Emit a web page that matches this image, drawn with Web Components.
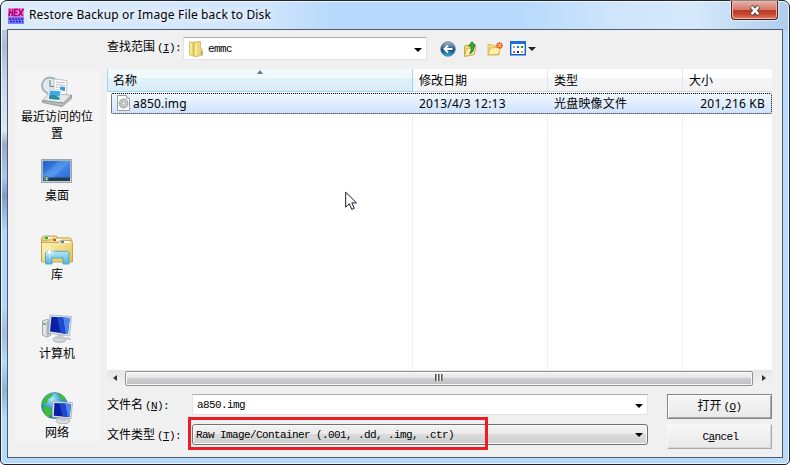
<!DOCTYPE html>
<html lang="zh-CN">
<head>
<meta charset="utf-8">
<title>Restore Backup or Image File back to Disk</title>
<style>
  html, body { margin: 0; height: 100%; overflow: hidden; background: #fff; }
  body {
    --ui: "Noto Sans", "Noto Sans CJK SC", sans-serif;
    --fixed: "Liberation Mono", "Noto Sans CJK SC", monospace;
    font: 12px/16px var(--ui);
    color: #000;
  }
</style>
</head>
<body>
<win-dialog></win-dialog>

<script>
class WinDialog extends HTMLElement {
  constructor() {
    super();
    this.attachShadow({mode: 'open'}).innerHTML = `
    <style>
      * { box-sizing: border-box; }
      :host {
        display: flex;
        flex-direction: column;
        box-sizing: border-box;
        position: relative;
        width: 790px;
        height: 465px;
        padding: 0 6px 6px;
        border: 1px solid #20242c;
        border-radius: 7px 7px 5px 5px;
        box-shadow: inset 0 0 0 1px #eef6ff;
        background:
          linear-gradient(90deg, #dcebfb 0, #cfe5fc 34%, #b7dafc 42% 66%, #cfe5fc 78%, #d6e9fc 88%, #aecdec) top / 100% 29px no-repeat,
          linear-gradient(#d3e5f8 0, #a9bdd6 10%, #c3d9f1 18%, #dbe9f8 28%, #96abc8 31%, #a7c8ee 38%, #7f9dc8 42%, #b4d7fb 50%, #b4d7fb 66%, #a0bfd8 72%, #b5dafe 78%, #8fb3d4 84%, #b5dafe 90%) left / 8px 100% no-repeat,
          #b7dafc;
      }
      header { display: flex; height: 28px; flex: none; }
      header svg { margin: 7px 0 0 1px; flex: none; }
      h1 {
        flex: 1;
        margin: 5px 0 0 5px;
        font: 12px/18px var(--ui);
        letter-spacing: .15px;
        white-space: nowrap;
        text-shadow: 0 0 7px #fff, 0 0 10px #fff;
      }
      .close {
        display: flex;
        align-items: center;
        justify-content: center;
        width: 47px;
        height: 19px;
        margin-right: 5px;
        border: 1px solid #4d1d24;
        border-top: 0;
        border-radius: 0 0 4px 4px;
        box-shadow: inset 0 0 0 1px #f0b5a9, 0 0 1px 1px #ffffff80;
        background: linear-gradient(#eab1a6, #d4796c 48%, #b93924 50%, #c84a30 75%, #df8164);
      }
      .close svg { margin: 0; }
      main {
        flex: 1;
        display: flex;
        flex-direction: column;
        border: 1px solid #4d5c6b;
        background: #f0f0f0;
        padding: 7px 10px 0 7px;
      }
      .look { display: flex; height: 23px; padding-left: 92px; align-items: center; }
      .look combo-box { width: 244px; height: 23px; }
      .look field-label { width: 76px; margin-top: -1px; }
      tool-strip { margin-left: 13px; }
      .body { display: flex; gap: 7px; margin-top: 9px; }
      places-bar { width: 85px; height: 374px; }
      .right { width: 665px; }
      .form { display: flex; justify-content: space-between; margin-top: 8px; }
      .fields { width: 541px; }
      .row { display: flex; align-items: flex-start; height: 30px; }
      .row field-label { width: 85px; margin-top: 4px; }
      .row combo-box { flex: 1; height: 21px; }
      .buttons { display: flex; flex-direction: column; gap: 5px; width: 105px; }
      .mark {
        position: absolute;
        left: 187px;
        top: 416px;
        width: 300px;
        height: 33px;
        border: 3px solid #ed1c24;
      }
      .pointer { position: absolute; left: 344px; top: 190px; }
    </style>
    <header>
      <svg width="16" height="16" viewBox="0 0 16 16">
        <path fill="#ee7fd0" d="M0 0h16v9H0z"/>
        <path fill="none" stroke="#a5007d" stroke-width="1.5" d="M2 1 1 8M5 1 4 8M1.500 4.500h3M10 1.500H7L6 7.500h3.500M6.500 4.500h3M11 1l3.500 7M15.500 1l-5 7"/>
        <path fill="#7d7cff" d="M0 9h16v7H0z"/>
        <path fill="none" stroke="#2b1fb8" stroke-width="1.300" stroke-dasharray="2 1" d="M1 11h14M2 13.500h13"/>
      </svg>
      <h1>Restore Backup or Image File back to Disk</h1>
      <div class="close">
        <svg width="12" height="11" viewBox="0 0 12 11">
          <path fill="none" stroke="#53434a" stroke-width="4.600" d="m2.300 1.500 7.400 8M9.700 1.500l-7.400 8"/>
          <path fill="none" stroke="#fff" stroke-width="2.500" d="m2.600 1.800 6.800 7.400M9.400 1.800 2.600 9.200"/>
        </svg>
      </div>
    </header>
    <main>
      <div class="look">
        <field-label key="I">查找范围</field-label>
        <combo-box>
          <svg slot="icon" width="14" height="16" viewBox="0 0 14 16">
            <path fill="#ecd06a" stroke="#cfac48" stroke-width=".6" d="M.5 1h5.500v14l-5.500-1z"/>
            <path fill="#fbefad" d="M1.300 1.800h1.500v11.500l-1.500-.3z"/>
            <path fill="#f1d672" stroke="#cfac48" stroke-width=".7" d="M5 2.500 8 .6h3.500v7l1.800.5v6.400L7 15.500H5z"/>
            <path fill="#fdf3bf" d="M6 3.200 7.500 2v12.500H6z"/>
            <path stroke="#4ea1dc" stroke-width="1.200" d="M12.500 10.500v3"/>
          </svg>emmc
        </combo-box>
        <tool-strip></tool-strip>
      </div>
      <div class="body">
        <places-bar></places-bar>
        <div class="right">
          <file-list></file-list>
          <scroll-bar></scroll-bar>
          <div class="form">
            <div class="fields">
              <div class="row"><field-label key="N">文件名</field-label><combo-box>a850.img</combo-box></div>
              <div class="row"><field-label key="T">文件类型</field-label><combo-box button>Raw Image/Container (.001, .dd, .img, .ctr)</combo-box></div>
            </div>
            <div class="buttons">
              <push-button default>打开<small>(<u>O</u>)</small></push-button>
              <push-button><small>C<u>a</u>ncel</small></push-button>
            </div>
          </div>
        </div>
      </div>
    </main>
    <div class="mark"></div>
    <svg class="pointer" width="13" height="20" viewBox="0 0 13 20">
      <path fill="#fff" stroke="#1b1b33" d="M.7 1.200v15l3.600-3.500 2.500 5.700 2.500-1.100-2.500-5.400h4.700z"/>
    </svg>
    `;
  }
}

class FieldLabel extends HTMLElement {
  connectedCallback() {
    this.attachShadow({mode: 'open'}).innerHTML = `
    <style>
      :host { display: block; font: 12px/16px var(--fixed); white-space: nowrap; }
      span { font-size: 11px; letter-spacing: -.6px; margin-left: 2px; }
    </style>
    <slot></slot><span>(<u>${this.getAttribute('key')}</u>):</span>
    `;
  }
}

class ComboBox extends HTMLElement {
  constructor() {
    super();
    this.attachShadow({mode: 'open'}).innerHTML = `
    <style>
      :host {
        display: flex;
        align-items: center;
        box-sizing: border-box;
        padding: 0 4px;
        border: 1px solid #e2e3ea;
        border-top-color: #abadb3;
        background: #fff;
        font: 11px/14px var(--fixed);
        letter-spacing: -.6px;
        white-space: nowrap;
      }
      :host([button]) {
        border: 1px solid #707070;
        border-radius: 3px;
        padding-left: 3px;
        box-shadow: inset 0 0 0 1px #fafafa;
        background: linear-gradient(#f2f2f2, #ebebeb 48%, #dadada 50%, #cfcfcf);
      }
      ::slotted(svg) { margin: 0 5px 0 1px; }
      div { flex: 1; display: flex; align-items: center; padding-top: 1px; }
      i { border: 4px solid transparent; border-top-color: #000; border-bottom: 0; margin-top: 3px; }
      :host([button]) i { margin-top: 1px; }
    </style>
    <slot name="icon"></slot><div><slot></slot></div><i></i>
    `;
  }
}

class PushButton extends HTMLElement {
  constructor() {
    super();
    this.attachShadow({mode: 'open'}).innerHTML = `
    <style>
      :host {
        display: flex;
        align-items: center;
        justify-content: center;
        box-sizing: border-box;
        height: 25px;
        border: 1px solid #f8f8f8;
        border-right-color: #a9a9a9;
        border-bottom-color: #a9a9a9;
        box-shadow: inset -1px -1px #d8d8d8;
        background: linear-gradient(#f6f6f6, #e9e9e9);
        font: 12px/16px var(--fixed);
      }
      :host([default]) {
        border-color: #858585;
        box-shadow: inset 1px 1px #fff, inset -1px -1px #a8a8a8;
      }
      ::slotted(small) { font-size: 11px; letter-spacing: -.6px; margin-left: 2px; }
    </style>
    <span><slot></slot></span>
    `;
  }
}

class ToolStrip extends HTMLElement {
  constructor() {
    super();
    this.attachShadow({mode: 'open'}).innerHTML = `
    <style>
      :host { display: flex; align-items: center; gap: 7.400px; }
      .menu { display: flex; align-items: center; gap: 2px; }
      i { border: 4px solid transparent; border-top-color: #222; border-bottom: 0; }
    </style>
    <svg width="16" height="16" viewBox="0 0 16 16">
      <defs><linearGradient id="b" x2="0" y2="1"><stop stop-color="#a9bdd0"/><stop offset=".45" stop-color="#35658f"/><stop offset=".55" stop-color="#124a80"/><stop offset="1" stop-color="#32b1e6"/></linearGradient></defs>
      <circle cx="8" cy="8" r="7.300" fill="url(#b)" stroke="#5e7b98" stroke-width=".8"/>
      <path fill="none" stroke="#fff" stroke-width="2" d="M12.500 8H5M8 4.500 4.500 8 8 11.500"/>
    </svg>
    <svg width="16" height="16" viewBox="0 0 16 16">
      <path fill="#f4dc7e" stroke="#c59b32" stroke-width=".8" d="M1.500 5 5 4l1 1h5v8.500l-9.500 1.800z"/>
      <path fill="#fff2ae" stroke="#caa23a" stroke-width=".8" d="m3.500 7.500 9.500-1-2 7-9.500 1.800z"/>
      <path fill="#35ad35" stroke="#10701a" stroke-width=".8" d="M5.500 5 9 .8 12.800 5h-2c.5 4-1 6.500-4 7.800C8.500 10 8.500 7.500 8 5z"/>
    </svg>
    <svg width="16" height="16" viewBox="0 0 16 16">
      <path fill="#f4dc7e" stroke="#d3ad4c" stroke-width=".8" d="M1 3.500h4l1 1.300h6V14H1z"/>
      <path fill="#fff0ab" stroke="#d3ad4c" stroke-width=".8" d="m3.500 7 10.500-1-2.500 7L1 14z"/>
      <path stroke="#f0522c" stroke-width="1.300" d="M12.500 1v7M9 4.500h7M10 2l5 5M15 2l-5 5"/>
      <circle cx="12.500" cy="4.500" r="1.500" fill="#ffc447"/>
    </svg>
    <span class="menu">
      <svg width="16" height="15" viewBox="0 0 16 15">
        <path fill="#fff" stroke="#0b62cc" stroke-width="1.400" d="M.7.7h14.600v13.100H.7z"/>
        <path fill="#1770d8" d="M0 0h16v3H0z"/>
        <path fill="#9db4cc" d="M3 5h2v2H3z"/><path fill="#1b76d6" d="M7 5h2v2H7z"/><path fill="#18913a" d="M11 5h2v2h-2z"/>
        <path fill="#e05a3c" d="M3 10h2v2H3z"/><path fill="#162b7c" d="M7 10h2v2H7z"/><path fill="#e6a02a" d="M11 10h2v2h-2z"/>
      </svg>
      <i></i>
    </span>
    `;
  }
}

class PlacesBar extends HTMLElement {
  constructor() {
    super();
    this.attachShadow({mode: 'open'}).innerHTML = `
    <style>
      :host { display: block; background: #f4f4f4; }
      place-item { height: 79px; }
      place-item:first-child { height: 80px; }
    </style>
    <place-item>
      <svg slot="icon" width="32" height="32" viewBox="0 0 32 32">
        <circle cx="9" cy="9.500" r="8" fill="#dfe9ee" stroke="#a1aeb6" stroke-width="1.800"/>
        <path fill="none" stroke="#617987" d="M9 4v6.500h5"/>
        <path fill="#fff" stroke="#b1b5b8" stroke-width=".8" d="m13 3 13 1.500-.5 17-12.500-1z"/>
        <path stroke="#a4adb5" stroke-width=".8" d="m15 6 9 1M15 8.500l9 1M15 11l3 .3M15 13.500l3 .3"/>
        <path fill="#399bcf" d="m19 10.500 5 .5v4l-5-.5z"/>
        <path fill="#e6e8ea" stroke="#a6a9ab" stroke-width=".8" d="m1.500 24.500 6-7 23 1.500-7 8z"/>
        <path fill="#b9bdc0" stroke="#898e92" stroke-width=".8" d="M1.500 24.500v2l19.500 4 9.500-8v-3.500l-8 8z"/>
        <path fill="#fff" stroke="#d6d9dc" stroke-width=".8" d="m8 13 12.500 1-1.500 11.500L6.500 24z"/>
        <path fill="#43a8e6" d="m9 14.500 10.500.8-.8 5.200L8.200 19.500z"/>
        <path fill="#2d8f9a" d="m8.200 19.500 4-1 6.500 3-.4 2.500-10.300-1z"/>
      </svg>最近访问的位置</place-item>
    <place-item>
      <svg slot="icon" width="32" height="32" viewBox="0 0 32 32">
        <defs><linearGradient id="d" x2="1" y2="1"><stop stop-color="#1c5ccc"/><stop offset=".55" stop-color="#4388ea"/><stop offset="1" stop-color="#2468d6"/></linearGradient></defs>
        <path fill="#c5ced8" stroke="#9aa6b6" d="M.5 4.500h30v23H.5z"/>
        <path fill="url(#d)" stroke="#607e9d" stroke-width=".6" d="M2 6h27v17H2z"/>
        <path fill="#8bc4f7" opacity=".25" d="M2 20 18 6h11L12 23H2z"/>
        <path fill="#253b53" d="M2 22.500h27V26H2z"/>
        <circle cx="5" cy="23.500" r="2.600" fill="#258bc2"/>
        <path fill="#ee6b2c" d="M3.500 22H5v1.500H3.500z"/><path fill="#8ad043" d="M5 22h1.500v1.500H5z"/><path fill="#f6ce3a" d="M5 23.500h1.500V25H5z"/>
      </svg>桌面</place-item>
    <place-item>
      <svg slot="icon" width="32" height="32" viewBox="0 0 32 32">
        <defs><linearGradient id="f" x2="1" y2="1"><stop stop-color="#fff6bd"/><stop offset="1" stop-color="#e5c04d"/></linearGradient>
        <linearGradient id="g" x2="0" y2="1"><stop stop-color="#b4e5f5"/><stop offset="1" stop-color="#57b4dc"/></linearGradient></defs>
        <path fill="#e6cd7c" stroke="#bc9944" stroke-width=".8" d="M.5 27V4l2-2h13l1 2H29l1.500 2v21z"/>
        <path fill="#fff" d="M4 3h11v2H4z"/><path fill="#15b536" d="M4 3h3v2H4z"/>
        <path fill="#f3dd8c" stroke="#c5a455" stroke-width=".7" d="M1 7 10 6l1-2h18l2 1.500V20H1z"/>
        <path fill="#fff" d="M12 5h9v2h-9z"/><path fill="#df4a32" d="M12 5h3v2h-3z"/>
        <path fill="url(#f)" stroke="#c19b42" stroke-width=".8" d="M.5 8.500h17l1.500-2h11l1.500 2v19.500H.5z"/>
        <path fill="#fff" d="M20 7h9v2h-9z"/><path fill="#258bed" d="M20 7h3v2h-3z"/>
        <path fill="url(#g)" stroke="#429cc3" stroke-width=".8" d="m4.500 18.500 1.500-1.200h20l2 1.200V30h-6v-6H11v6H4.500z"/>
        <path stroke="#fff" stroke-width=".7" d="M8.500 12v12M3 18h11M5 14.500l7 7M12 14.500l-7 7"/>
        <circle cx="8.500" cy="18" r="1.800" fill="#fff"/>
      </svg>库</place-item>
    <place-item>
      <svg slot="icon" width="32" height="32" viewBox="0 0 32 32">
        <path fill="#e1e5e8" stroke="#8b9196" stroke-width=".8" d="m1.500 8 4-1.500 4 1v15l-4 1.500-4-2z"/>
        <path fill="#aeb4b9" d="M5.500 8v15l4-1.500v-13z"/><path fill="#36b738" d="M2.500 10h2v2h-2z"/>
        <ellipse cx="18.500" cy="26.500" rx="6.500" ry="2.800" fill="#d4d8dc" stroke="#a8adb2"/>
        <path fill="#c5cacf" d="m16 21 6 1v4h-6z"/>
        <path fill="#e0e5eb" stroke="#a6adb8" stroke-width=".8" d="M9 2 30.500 3.500 28.500 23 7.500 20z"/>
        <path fill="#0a1fa6" d="M10.500 3.700 28.800 5 26.800 21 9 18.600z"/>
        <path fill="#4b86f0" d="m22 4.500 6.800.5-2 16-2.300-.3z"/>
        <path fill="#1d49cc" d="m16 4.100 6 .4 2.500 16.200-5-.7z"/>
        <path stroke="#b8bec4" stroke-width="1.600" d="m25 25 5 1.500"/>
      </svg>计算机</place-item>
    <place-item>
      <svg slot="icon" width="32" height="32" viewBox="0 0 32 32">
        <defs><radialGradient id="w" cx=".4" cy=".25" r=".8"><stop stop-color="#b3ecfb"/><stop offset=".5" stop-color="#2a91d2"/><stop offset="1" stop-color="#0a458e"/></radialGradient></defs>
        <circle cx="13.500" cy="13.500" r="13" fill="url(#w)" stroke="#2d78a5" stroke-width=".6"/>
        <path fill="#42bb37" d="M3 7C5 4 8 2 11 1l1 2-3 3-2 1-1 4-3 1-1 2C.5 12 1 9 3 7zM2 15l4-1 4 3 1 4-3 5c-4-2-6-7-6-11zM17 1c4 1 7 4 8.500 8L21 8l-3-3z"/>
        <ellipse cx="22" cy="29" rx="7" ry="2.700" fill="#dadee2" stroke="#a2a8ae" stroke-width=".8"/>
        <path fill="#c5cacf" d="M19 25h6v4h-6z"/>
        <path fill="#e0e5eb" stroke="#a6adb8" stroke-width=".8" d="m12 9.500 19.500 1-1.500 16L11 25z"/>
        <path fill="#0a1fa6" d="m13.500 11 16.500.9L28.500 25l-15.800-1.300z"/>
        <path fill="#4b86f0" d="m24 11.600 6 .3L28.500 25l-2-.2z"/>
        <path fill="#1d49cc" d="m18.500 11.300 5.500.3 2.500 13.200-5-.4z"/>
      </svg>网络</place-item>
    `;
  }
}

class PlaceItem extends HTMLElement {
  constructor() {
    super();
    this.attachShadow({mode: 'open'}).innerHTML = `
    <style>
      :host {
        display: flex;
        flex-direction: column;
        align-items: center;
        box-sizing: border-box;
        padding-top: 7px;
        font: 12px/17px var(--ui);
      }
      ::slotted(svg) { display: block; margin-right: 1px; }
      div { width: 74px; text-align: center; margin-left: -1px; }
    </style>
    <slot name="icon"></slot><div><slot></slot></div>
    `;
  }
}

class FileList extends HTMLElement {
  constructor() {
    super();
    this.attachShadow({mode: 'open'}).innerHTML = `
    <style>
      * { box-sizing: border-box; }
      :host {
        display: block;
        height: 301px;
        background:
          linear-gradient(#e8f1fb, #e8f1fb) 305px 0 / 1px 100% no-repeat,
          linear-gradient(#e8f1fb, #e8f1fb) 440px 0 / 1px 100% no-repeat,
          linear-gradient(#e8f1fb, #e8f1fb) 575px 0 / 1px 100% no-repeat,
          #fff;
      }
      .head, .file { display: grid; grid-template-columns: 306px 135px 135px 89px; }
      .head { height: 23px; }
      .head span {
        position: relative;
        padding: 4px 0 0 6px;
        border-right: 1px solid #e2e6ec;
        border-bottom: 1px solid #d5d5d5;
        background: linear-gradient(#fff 40%, #f5f6f8 42%, #f1f2f4);
      }
      .head span:last-child { border-right: 0; }
      .head .sorted {
        border-color: #96d9f9;
        border-left: 1px solid #96d9f9;
        padding-left: 5px;
        background: linear-gradient(#f2f9fc 40%, #e1f1f9 42%, #d8ecf6);
      }
      .sorted i {
        position: absolute;
        left: 149px;
        top: 1px;
        border: 3.500px solid transparent;
        border-top: 0;
        border-bottom: 4px solid #4d83a0;
      }
      .file {
        grid-template-columns: 302px 135px 135px 88px;
        margin: 1px 0 0 4px;
        height: 21px;
        line-height: 17px;
        border: 1px dotted #000;
        border-radius: 2px;
        background: linear-gradient(#f1f7fe, #cfe4fe);
        letter-spacing: .2px;
      }
      .file span { padding: 1px 0 0 5px; }
      .file .name { display: flex; gap: 2px; padding-left: 4px; }
      .file .size { text-align: right; padding-right: 7px; }
      .name svg { margin-top: 0; }
    </style>
    <div class="head"><span class="sorted">名称<i></i></span><span>修改日期</span><span>类型</span><span>大小</span></div>
    <div class="file">
      <span class="name"><svg width="15" height="16" viewBox="0 0 15 16">
        <path fill="#fff" stroke="#929292" stroke-width=".9" d="M1.500.5h9l3 3v12h-12z"/>
        <path fill="#e7e7e7" stroke="#929292" stroke-width=".7" d="M10.500.5v3h3"/>
        <circle cx="7.500" cy="8.500" r="4.500" fill="#c3c9c9" stroke="#8c9292" stroke-width=".8"/>
        <path fill="#a4ce9b" d="m7.500 8.500-4-2a4.500 4.500 0 0 0 0 4z"/>
        <circle cx="7.500" cy="8.500" r="1.400" fill="#fff" stroke="#999" stroke-width=".6"/>
      </svg>a850.img</span>
      <span>2013/4/3 12:13</span><span>光盘映像文件</span><span class="size">201,216 KB</span>
    </div>
    `;
  }
}

class ScrollBar extends HTMLElement {
  constructor() {
    super();
    this.attachShadow({mode: 'open'}).innerHTML = `
    <style>
      :host { display: flex; height: 16px; align-items: center; background: linear-gradient(#e6e6e6, #f2f2f2); }
      i { border: 3.500px solid transparent; }
      .l { border-right: 4px solid #333; border-left: 0; margin: 0 8px 0 6px; }
      .r { border-left: 4px solid #333; border-right: 0; margin-left: 9px; }
      div {
        display: flex;
        justify-content: center;
        align-items: center;
        box-sizing: border-box;
        width: 628px;
        height: 15px;
        border: 1px solid #929292;
        border-radius: 2px;
        box-shadow: inset 0 0 0 1px #f8f8f8;
        background: linear-gradient(#f3f3f3, #e4e4e6 48%, #cdcdd0 50%, #bebec1);
      }
      b { width: 8px; height: 7px; margin-bottom: 1px; background: repeating-linear-gradient(90deg, #555 0 1px, #999 1px 2px, #f4f4f4 2px 3px); }
    </style>
    <i class="l"></i><div><b></b></div><i class="r"></i>
    `;
  }
}

customElements.define('field-label', FieldLabel);
customElements.define('combo-box', ComboBox);
customElements.define('push-button', PushButton);
customElements.define('tool-strip', ToolStrip);
customElements.define('place-item', PlaceItem);
customElements.define('places-bar', PlacesBar);
customElements.define('file-list', FileList);
customElements.define('scroll-bar', ScrollBar);
customElements.define('win-dialog', WinDialog);
</script>
</body>
</html>
